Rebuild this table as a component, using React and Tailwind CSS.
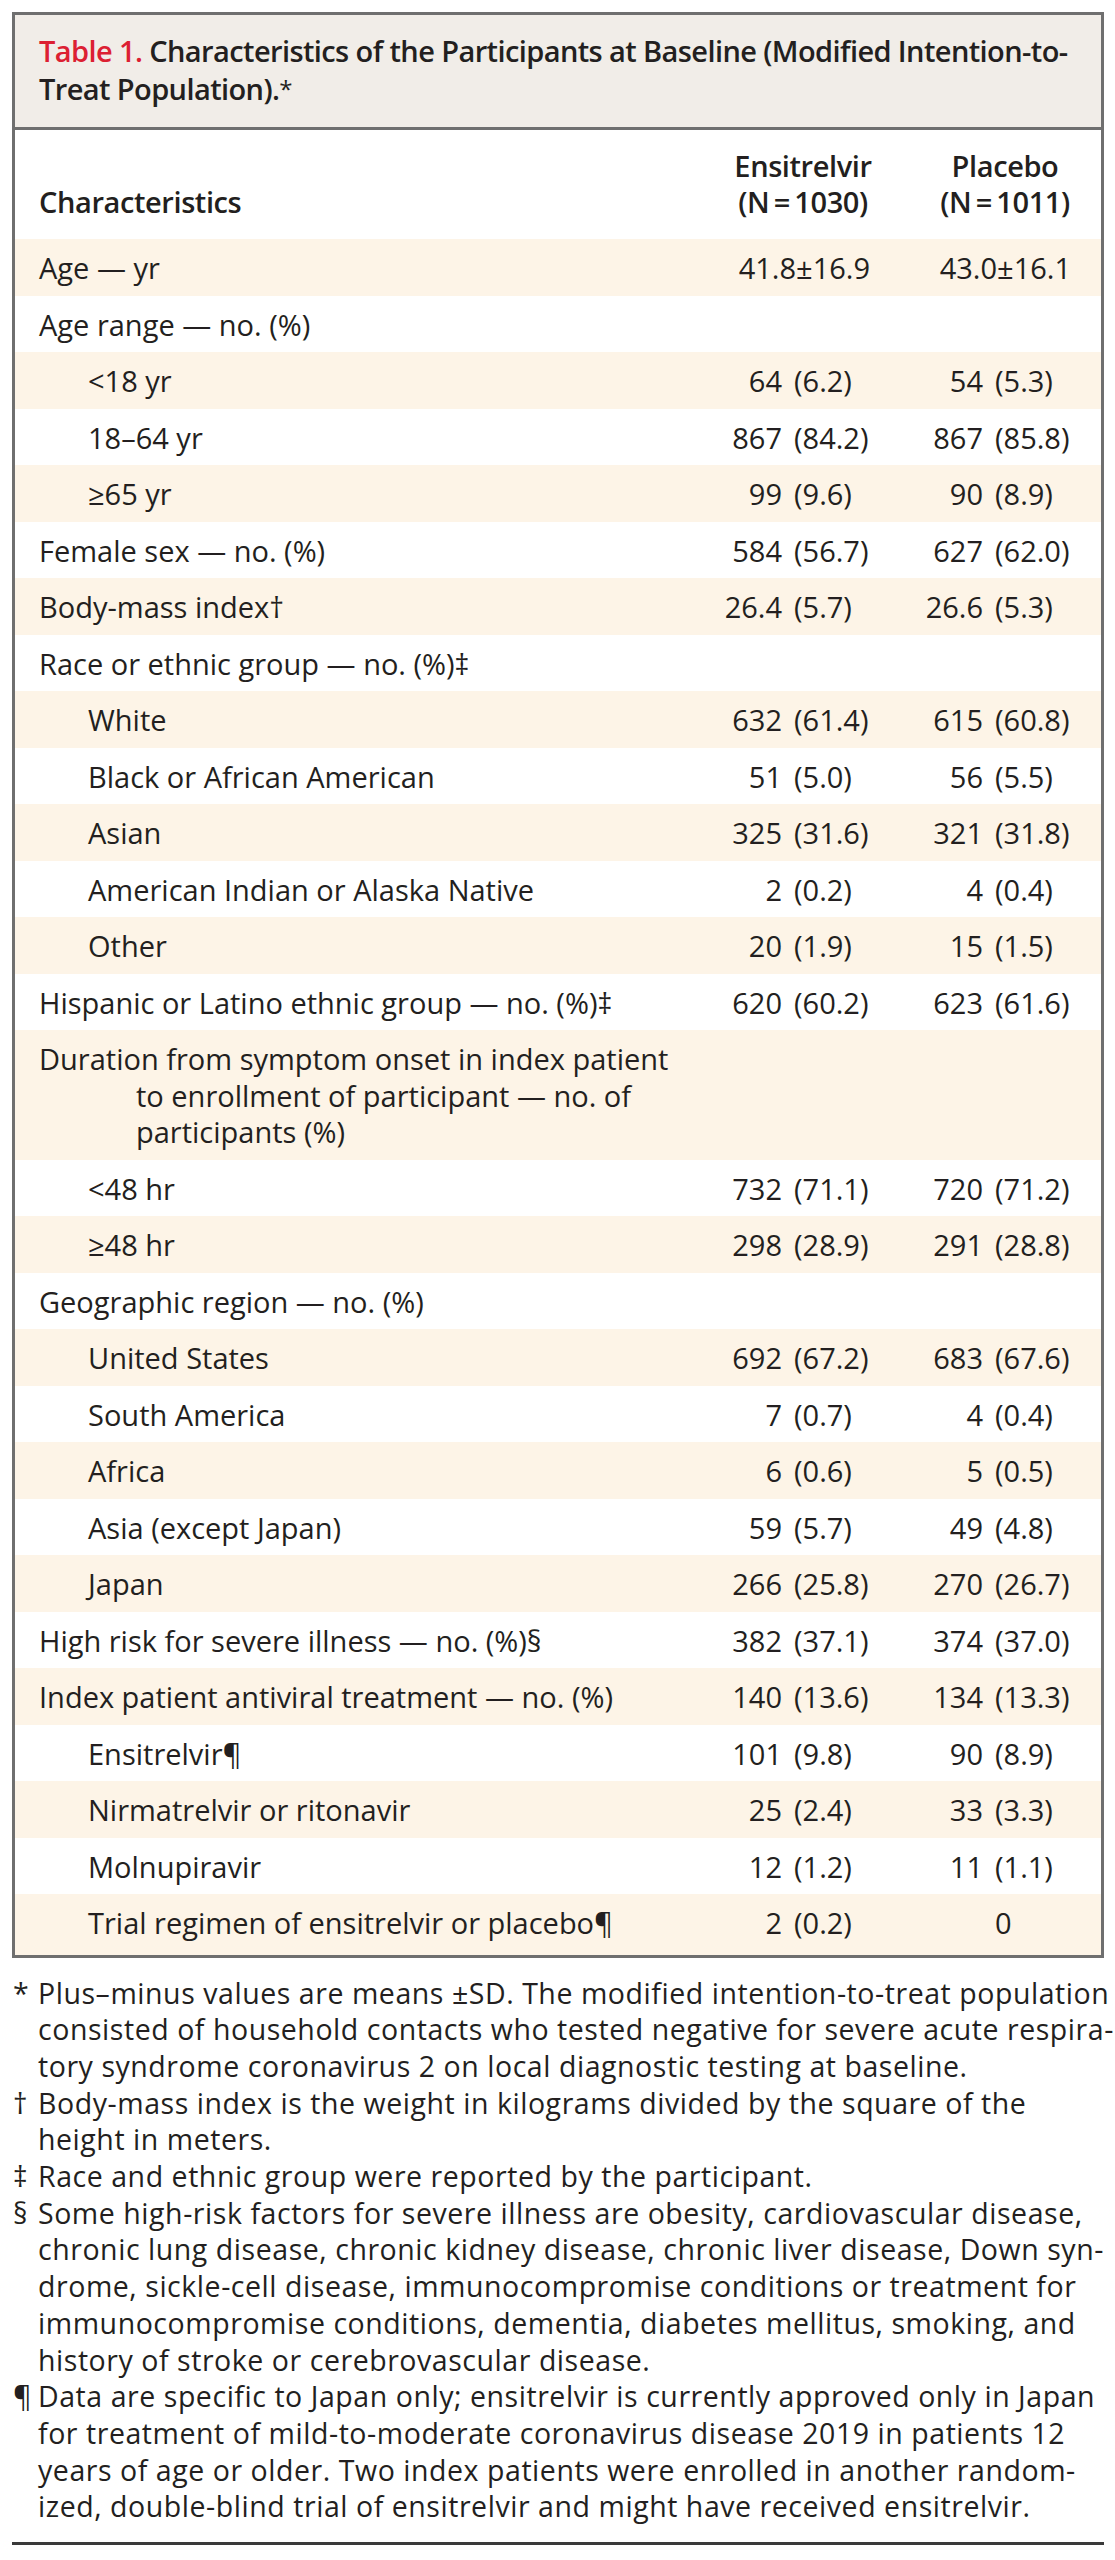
import React from 'react';

const rows = [
  { label: 'Age — yr', e: ['41.8±16.9'], p: ['43.0±16.1'] },
  { label: 'Age range — no. (%)' },
  { label: '<18 yr', sub: true, e: ['64', '(6.2)'], p: ['54', '(5.3)'] },
  { label: '18–64 yr', sub: true, e: ['867', '(84.2)'], p: ['867', '(85.8)'] },
  { label: '≥65 yr', sub: true, e: ['99', '(9.6)'], p: ['90', '(8.9)'] },
  { label: 'Female sex — no. (%)', e: ['584', '(56.7)'], p: ['627', '(62.0)'] },
  { label: 'Body-mass index†', e: ['26.4', '(5.7)'], p: ['26.6', '(5.3)'] },
  { label: 'Race or ethnic group — no. (%)‡' },
  { label: 'White', sub: true, e: ['632', '(61.4)'], p: ['615', '(60.8)'] },
  { label: 'Black or African American', sub: true, e: ['51', '(5.0)'], p: ['56', '(5.5)'] },
  { label: 'Asian', sub: true, e: ['325', '(31.6)'], p: ['321', '(31.8)'] },
  { label: 'American Indian or Alaska Native', sub: true, e: ['2', '(0.2)'], p: ['4', '(0.4)'] },
  { label: 'Other', sub: true, e: ['20', '(1.9)'], p: ['15', '(1.5)'] },
  { label: 'Hispanic or Latino ethnic group — no. (%)‡', e: ['620', '(60.2)'], p: ['623', '(61.6)'] },
  {
    lines: [
      'Duration from symptom onset in index patient',
      'to enrollment of participant — no. of',
      'participants (%)',
    ],
  },
  { label: '<48 hr', sub: true, e: ['732', '(71.1)'], p: ['720', '(71.2)'] },
  { label: '≥48 hr', sub: true, e: ['298', '(28.9)'], p: ['291', '(28.8)'] },
  { label: 'Geographic region — no. (%)' },
  { label: 'United States', sub: true, e: ['692', '(67.2)'], p: ['683', '(67.6)'] },
  { label: 'South America', sub: true, e: ['7', '(0.7)'], p: ['4', '(0.4)'] },
  { label: 'Africa', sub: true, e: ['6', '(0.6)'], p: ['5', '(0.5)'] },
  { label: 'Asia (except Japan)', sub: true, e: ['59', '(5.7)'], p: ['49', '(4.8)'] },
  { label: 'Japan', sub: true, e: ['266', '(25.8)'], p: ['270', '(26.7)'] },
  { label: 'High risk for severe illness — no. (%)§', e: ['382', '(37.1)'], p: ['374', '(37.0)'] },
  { label: 'Index patient antiviral treatment — no. (%)', e: ['140', '(13.6)'], p: ['134', '(13.3)'] },
  { label: 'Ensitrelvir¶', sub: true, e: ['101', '(9.8)'], p: ['90', '(8.9)'] },
  { label: 'Nirmatrelvir or ritonavir', sub: true, e: ['25', '(2.4)'], p: ['33', '(3.3)'] },
  { label: 'Molnupiravir', sub: true, e: ['12', '(1.2)'], p: ['11', '(1.1)'] },
  { label: 'Trial regimen of ensitrelvir or placebo¶', sub: true, e: ['2', '(0.2)'], p: ['', '0'] },
];

const notes = [
  {
    mark: '*',
    lines: [
      'Plus–minus values are means ±SD. The modified intention-to-treat population',
      'consisted of household contacts who tested negative for severe acute respira-',
      'tory syndrome coronavirus 2 on local diagnostic testing at baseline.',
    ],
  },
  {
    mark: '†',
    lines: ['Body-mass index is the weight in kilograms divided by the square of the', 'height in meters.'],
  },
  { mark: '‡', lines: ['Race and ethnic group were reported by the participant.'] },
  {
    mark: '§',
    lines: [
      'Some high-risk factors for severe illness are obesity, cardiovascular disease,',
      'chronic lung disease, chronic kidney disease, chronic liver disease, Down syn-',
      'drome, sickle-cell disease, immunocompromise conditions or treatment for',
      'immunocompromise conditions, dementia, diabetes mellitus, smoking, and',
      'history of stroke or cerebrovascular disease.',
    ],
  },
  {
    mark: '¶',
    lines: [
      'Data are specific to Japan only; ensitrelvir is currently approved only in Japan',
      'for treatment of mild-to-moderate coronavirus disease 2019 in patients 12',
      'years of age or older. Two index patients were enrolled in another random-',
      'ized, double-blind trial of ensitrelvir and might have received ensitrelvir.',
    ],
  },
];

// number right-aligned, percentage left-aligned so the parentheses line up
function Value({ v }) {
  if (!v) return <div className="w-[172px]" />;
  if (v.length === 1) {
    return <div className="w-[172px] pr-[4px] text-right whitespace-nowrap">{v[0]}</div>;
  }
  return (
    <div className="w-[172px] flex whitespace-nowrap">
      <span className="w-[80px] text-right">{v[0]}</span>
      <span className="w-[80px] ml-[12px] text-left">{v[1]}</span>
    </div>
  );
}

function Row({ row, shaded }) {
  return (
    <div
      className={`flex items-start pt-[11px] pb-[9px] pr-[26px] leading-[36.5px] ${
        shaded ? 'bg-[#fdf4e7]' : 'bg-white'
      }`}
    >
      <div className={`flex-1 whitespace-nowrap ${row.sub ? 'pl-[73px]' : 'pl-[24px]'}`}>
        {row.lines ? (
          <>
            <div>{row.lines[0]}</div>
            <div className="pl-[97px]">{row.lines[1]}</div>
            <div className="pl-[97px]">{row.lines[2]}</div>
          </>
        ) : (
          row.label
        )}
      </div>
      <Value v={row.e} />
      <div className="ml-[29px]">
        <Value v={row.p} />
      </div>
    </div>
  );
}

export default function App() {
  return (
    <div className="min-h-screen w-[1115px] bg-white pt-[12px] font-['Open_Sans',sans-serif] text-[#231f20]">
      <div className="ml-[12px] w-[1092px] border-[3px] border-[#6f6f6f]">
        <div className="bg-[#f1ede8] border-b-[3px] border-[#6f6f6f] pl-[24px] pt-[17px] pb-[19px] text-[29px] leading-[38px] font-semibold tracking-[-0.6px] whitespace-nowrap">
          <span className="text-[#dc2032]">Table 1.</span> Characteristics of the Participants at Baseline (Modified
          Intention-to-
          <br />
          Treat Population).<span className="font-normal text-[24px] align-[2px]">*</span>
        </div>

        <div className="flex items-end pt-[18px] pb-[19px] pr-[21px] text-[29px] leading-[36px] font-semibold tracking-[-0.4px]">
          <div className="flex-1 pl-[24px]">Characteristics</div>
          <div className="w-[150px] text-center">
            <div>Ensitrelvir</div>
            <div>(N{'\u2009'}={'\u2009'}1030)</div>
          </div>
          <div className="ml-[52px] w-[150px] text-center">
            <div>Placebo</div>
            <div>(N{'\u2009'}={'\u2009'}1011)</div>
          </div>
        </div>

        <div className="pb-[4px] bg-[#fdf4e7] text-[29px]">
          {rows.map((row, i) => (
            <Row key={i} row={row} shaded={i % 2 === 0} />
          ))}
        </div>
      </div>

      <div className="mt-[17px] ml-[13px] text-[28.5px] leading-[36.7px] tracking-[0.55px]">
        {notes.map((n) => (
          <div key={n.mark} className="flex">
            <span className="w-[25px] shrink-0 tracking-normal">{n.mark}</span>
            <div>
              {n.lines.map((l, j) => (
                <div key={j} className="whitespace-nowrap">
                  {l}
                </div>
              ))}
            </div>
          </div>
        ))}
      </div>

      <div className="mt-[17px] ml-[12px] w-[1092px] h-[3px] bg-[#3a3a3a]" />
    </div>
  );
}
